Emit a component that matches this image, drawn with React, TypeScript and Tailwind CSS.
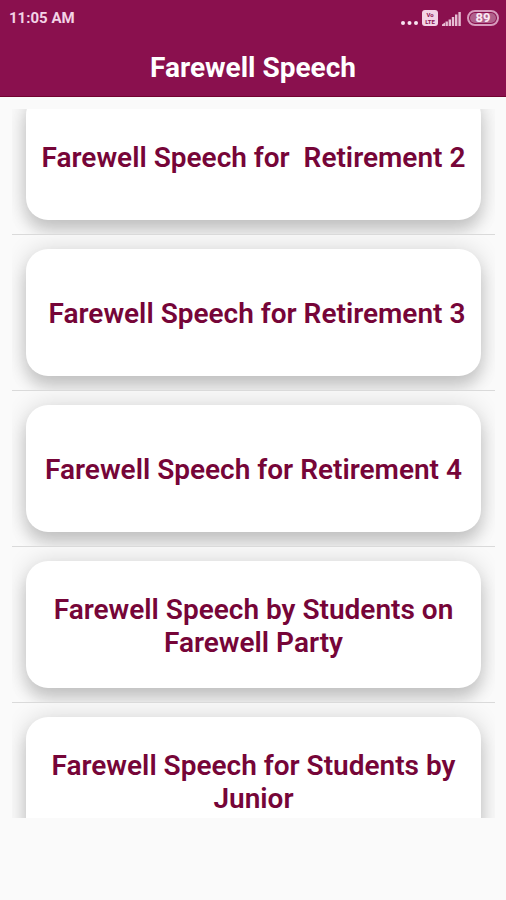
const speeches = [
  'Farewell Speech for  Retirement 2',
  ' Farewell Speech for Retirement 3',
  'Farewell Speech for Retirement 4',
  'Farewell Speech by Students on Farewell Party',
  'Farewell Speech for Students by Junior',
];

const SignalIcon = () => (
  <svg width="19" height="14" viewBox="0 0 19 14" fill="#e6bdd3" aria-hidden="true">
    <path d="M0 14v-1.5L3 10.5V14z" />
    <rect x="3.5" y="9.5" width="2.4" height="4.5" />
    <rect x="6.6" y="7.5" width="2.4" height="6.5" />
    <rect x="9.8" y="5" width="2.4" height="9" />
    <rect x="13" y="2.5" width="2.4" height="11.5" />
    <rect x="16.4" y="0" width="2.4" height="14" />
  </svg>
);

const DotsIcon = () => (
  <svg width="17" height="5" viewBox="0 0 17 5" fill="#f8e4f0" aria-hidden="true">
    <circle cx="2" cy="2" r="2" />
    <circle cx="8.5" cy="2" r="2" />
    <circle cx="15" cy="2" r="2" />
  </svg>
);

const StatusBar = () => (
  <div className="flex h-9 items-center justify-between pl-[9px] pr-[7px] text-[#f3d3e6]">
    <span className="text-[15px] font-bold leading-4">11:05 AM</span>
    <div className="flex h-4 items-end gap-1">
      <DotsIcon />
      <span className="flex h-4 w-4 flex-col items-center justify-center rounded-[3px] bg-[#f3d3e6] text-[6px] font-bold leading-[7px] text-[#8a104e]">
        <span>Vo</span>
        <span>LTE</span>
      </span>
      <SignalIcon />
      <span className="ml-[2px] flex h-4 w-8 items-center justify-center rounded-full border-2 border-[#d79bbd] p-px">
        <span className="flex h-full w-full items-center justify-center rounded-full bg-[#b0608b] text-[13px] font-bold leading-3 text-[#fbeaf4]">
          89
        </span>
      </span>
    </div>
  </div>
);

const SpeechRow = ({ title }: { title: string }) => (
  <li className="shrink-0 overflow-hidden border-b border-[#dadada] px-[14px] pb-[14px] pt-[14px]">
    <button className="flex min-h-[127px] w-full items-center justify-center rounded-[22px] bg-white px-2 pt-[2px] text-center text-[28px] font-semibold leading-[33px] text-[#760538] shadow-[0_12px_16px_rgba(0,0,0,0.16),0_0_24px_rgba(0,0,0,0.14)]">
      <span className="whitespace-pre-wrap">{title}</span>
    </button>
  </li>
);

const App = () => {
  return (
    <div className="flex h-screen flex-col bg-[#fafafa] font-['Roboto','Liberation_Sans',sans-serif]">
      <header className="h-[97px] shrink-0 border-b border-[#720330] bg-[#8a104e]">
        <StatusBar />
        <h1 className="pt-[15px] text-center text-[28px] font-bold leading-[33px] text-white">Farewell Speech</h1>
      </header>

      <main className="mb-[82px] ml-3 mr-[11px] mt-3 min-h-0 flex-1 overflow-hidden">
        {/* list is scrolled part way into its first row */}
        <ul className="-mt-[30px] flex flex-col">
          {speeches.map((title) => (
            <SpeechRow key={title} title={title} />
          ))}
        </ul>
      </main>
    </div>
  );
};

export default App;
